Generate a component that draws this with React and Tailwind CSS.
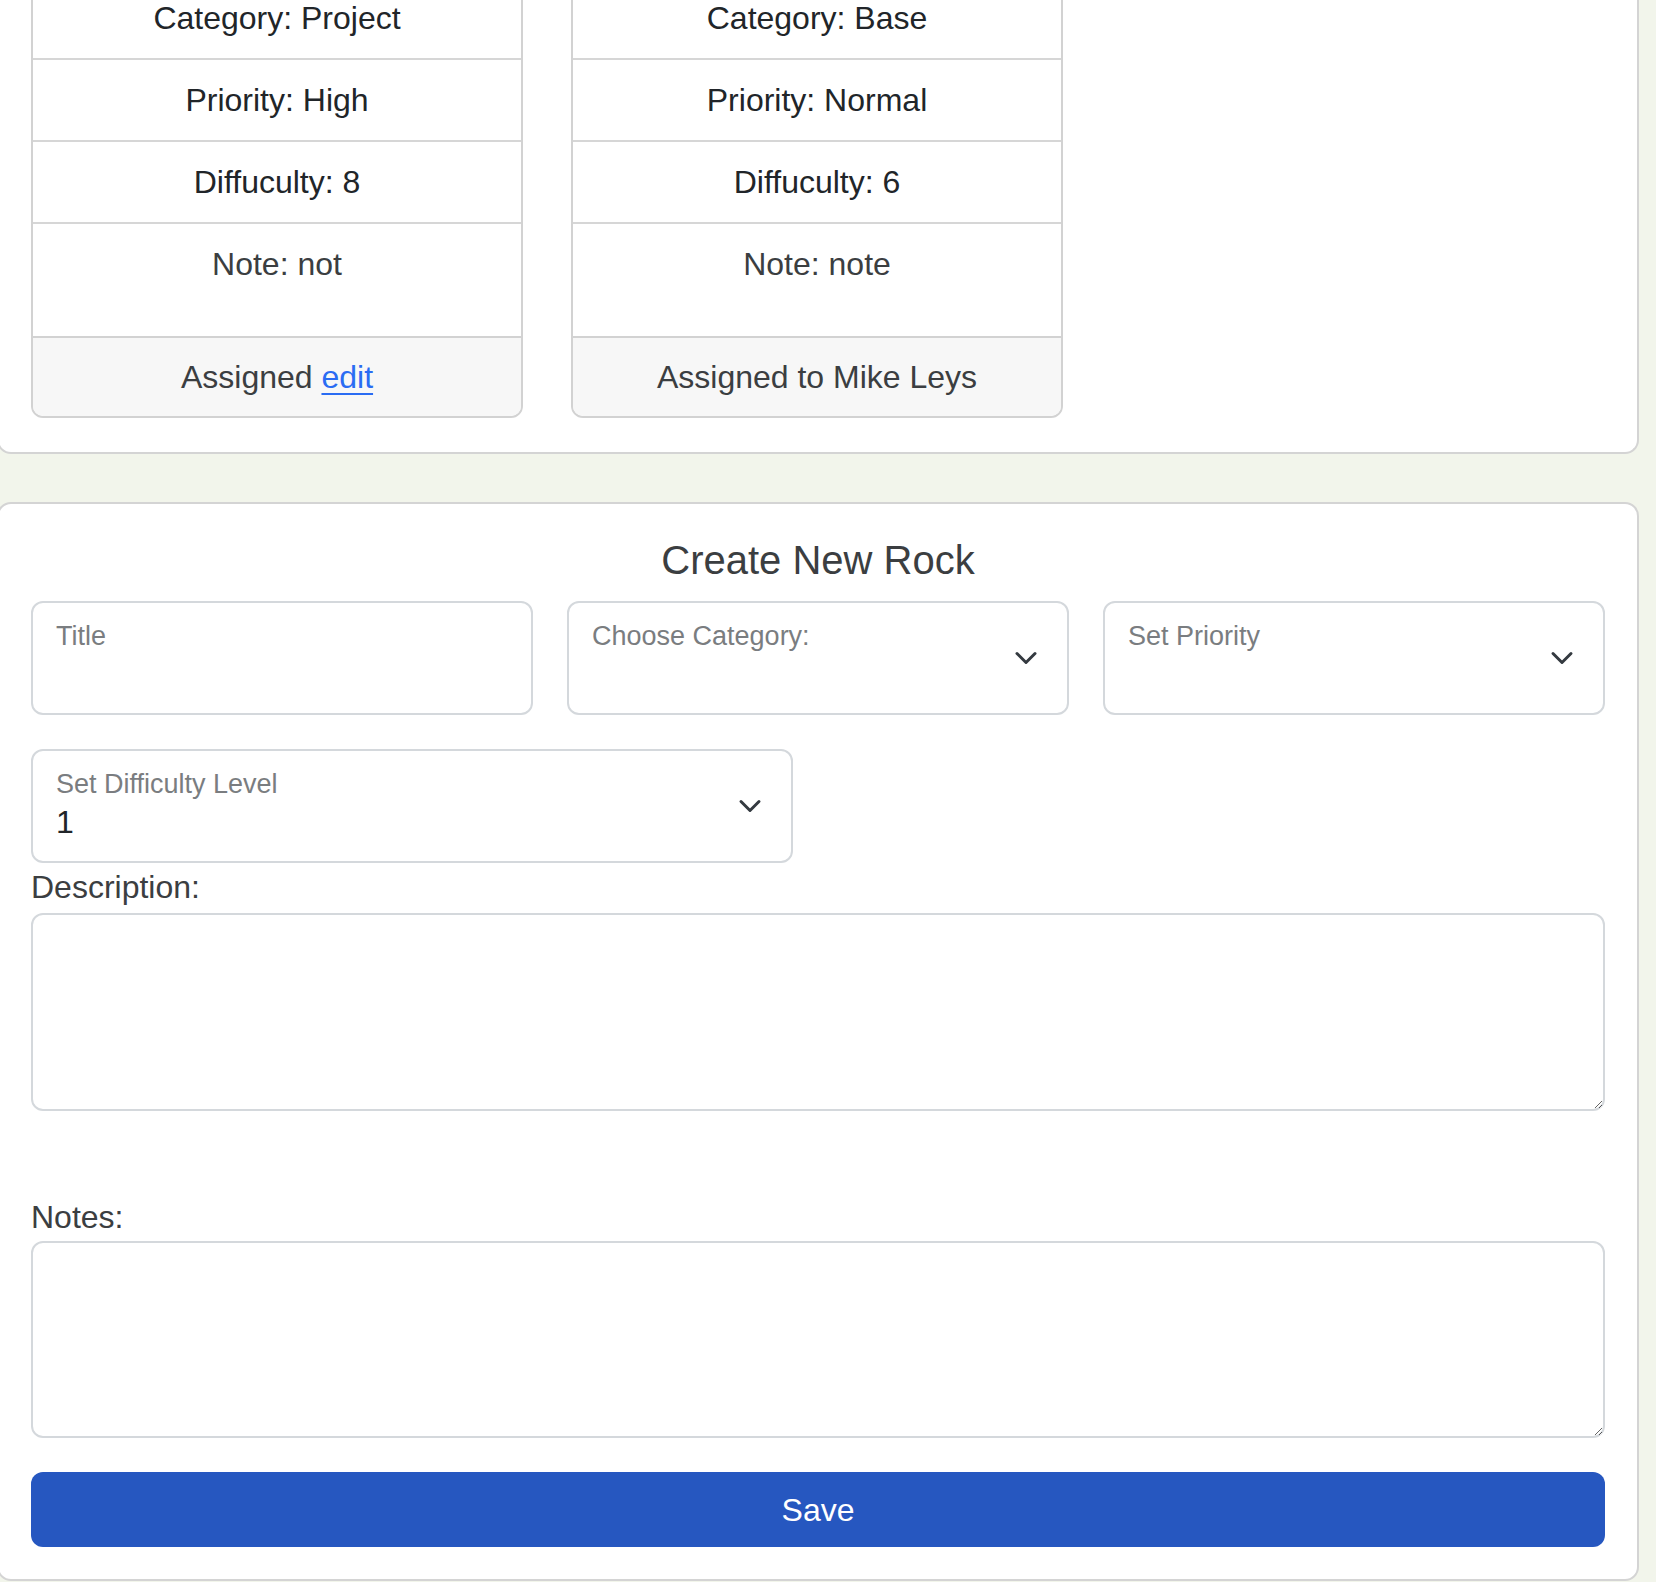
import React from 'react';

const cards = [
  { category: 'Project', priority: 'High', difficulty: 8, note: 'not', assigned: null },
  { category: 'Base', priority: 'Normal', difficulty: 6, note: 'note', assigned: 'Mike Leys' },
];

function Chevron() {
  return (
    <svg
      className="absolute right-[29px] top-1/2 -translate-y-1/2 w-[24px] h-[24px]"
      viewBox="0 0 16 16"
      fill="none"
      stroke="#343a40"
      strokeWidth="2"
      strokeLinecap="round"
      strokeLinejoin="round"
    >
      <path d="m2 5 6 6 6-6" />
    </svg>
  );
}

function FloatingField({ label, value, select, className = '' }) {
  return (
    <div className={`relative h-[114px] border-2 border-[#d4d8dc] rounded-[12px] bg-white pl-[23px] pt-[17px] ${className}`}>
      <div className="text-[27px] leading-[33px] text-[#7a7d80]">{label}</div>
      {value && <div className="text-[32px] leading-[42px] text-[#212529]">{value}</div>}
      {select && <Chevron />}
    </div>
  );
}

function RockCard({ rock }) {
  return (
    <div className="w-[492px] border-2 border-[#d2d2d2] rounded-[12px] overflow-hidden bg-white text-center">
      <div className="h-[80px] leading-[80px] text-[#212529]">Category: {rock.category}</div>
      <div className="h-[82px] leading-[80px] border-t-2 border-[#d6d6d6] text-[#212529]">Priority: {rock.priority}</div>
      <div className="h-[82px] leading-[80px] border-t-2 border-[#d6d6d6] text-[#212529]">Diffuculty: {rock.difficulty}</div>
      <div className="h-[114px] pt-[16px] leading-[48px] border-t-2 border-[#d6d6d6] text-[#3b3e41]">Note: {rock.note}</div>
      <div className="h-[80px] leading-[78px] border-t-2 border-[#d2d2d2] bg-[#f7f7f7] text-[#3b3e41]">
        {rock.assigned ? (
          <>Assigned to {rock.assigned}</>
        ) : (
          <>
            Assigned <a href="#" className="text-[#2a6cf3] underline underline-offset-[5px] decoration-2">edit</a>
          </>
        )}
      </div>
    </div>
  );
}

export default function App() {
  return (
    <div
      className="w-full h-[1582px] overflow-hidden bg-[#f2f5eb] text-[32px]"
      style={{ fontFamily: '"Liberation Sans", Arial, Helvetica, sans-serif' }}
    >
      {/* Rocks list panel (scrolled, top cut off) */}
      <div className="flex flex-col -ml-[3px] w-[1642px] bg-white border-2 border-t-0 border-[#d4d4d4] rounded-b-[14px] pl-[32px] pb-[34px]">
        <div className="flex gap-[48px] -mt-[24px]">
          {cards.map((rock) => (
            <RockCard key={rock.category} rock={rock} />
          ))}
        </div>
      </div>

      {/* Create form panel */}
      <div className="mt-[48px] -ml-[3px] w-[1642px] bg-white border-2 border-[#d4d4d4] rounded-[14px] px-[32px] pt-[32px] pb-[32px]">
        <h2 className="text-[40px] leading-[48px] text-center text-[#3b3e41]">Create New Rock</h2>

        <div className="mt-[17px] grid grid-cols-3 gap-[34px]">
          <FloatingField label="Title" />
          <FloatingField label="Choose Category:" select />
          <FloatingField label="Set Priority" select />
        </div>

        <FloatingField label="Set Difficulty Level" value="1" select className="mt-[34px] w-[762px]" />

        <label className="block leading-[48px] mb-[2px] text-[#3b3e41]">Description:</label>
        <textarea className="block w-full h-[198px] border-2 border-[#d4d8dc] rounded-[12px] bg-white" />

        <label className="block mt-[82px] leading-[48px] text-[#3b3e41]">Notes:</label>
        <textarea className="block w-full h-[197px] border-2 border-[#d4d8dc] rounded-[12px] bg-white" />

        <button className="mt-[34px] w-full h-[75px] rounded-[12px] bg-[#2657c0] text-white text-[32px]">
          Save
        </button>
      </div>
    </div>
  );
}
